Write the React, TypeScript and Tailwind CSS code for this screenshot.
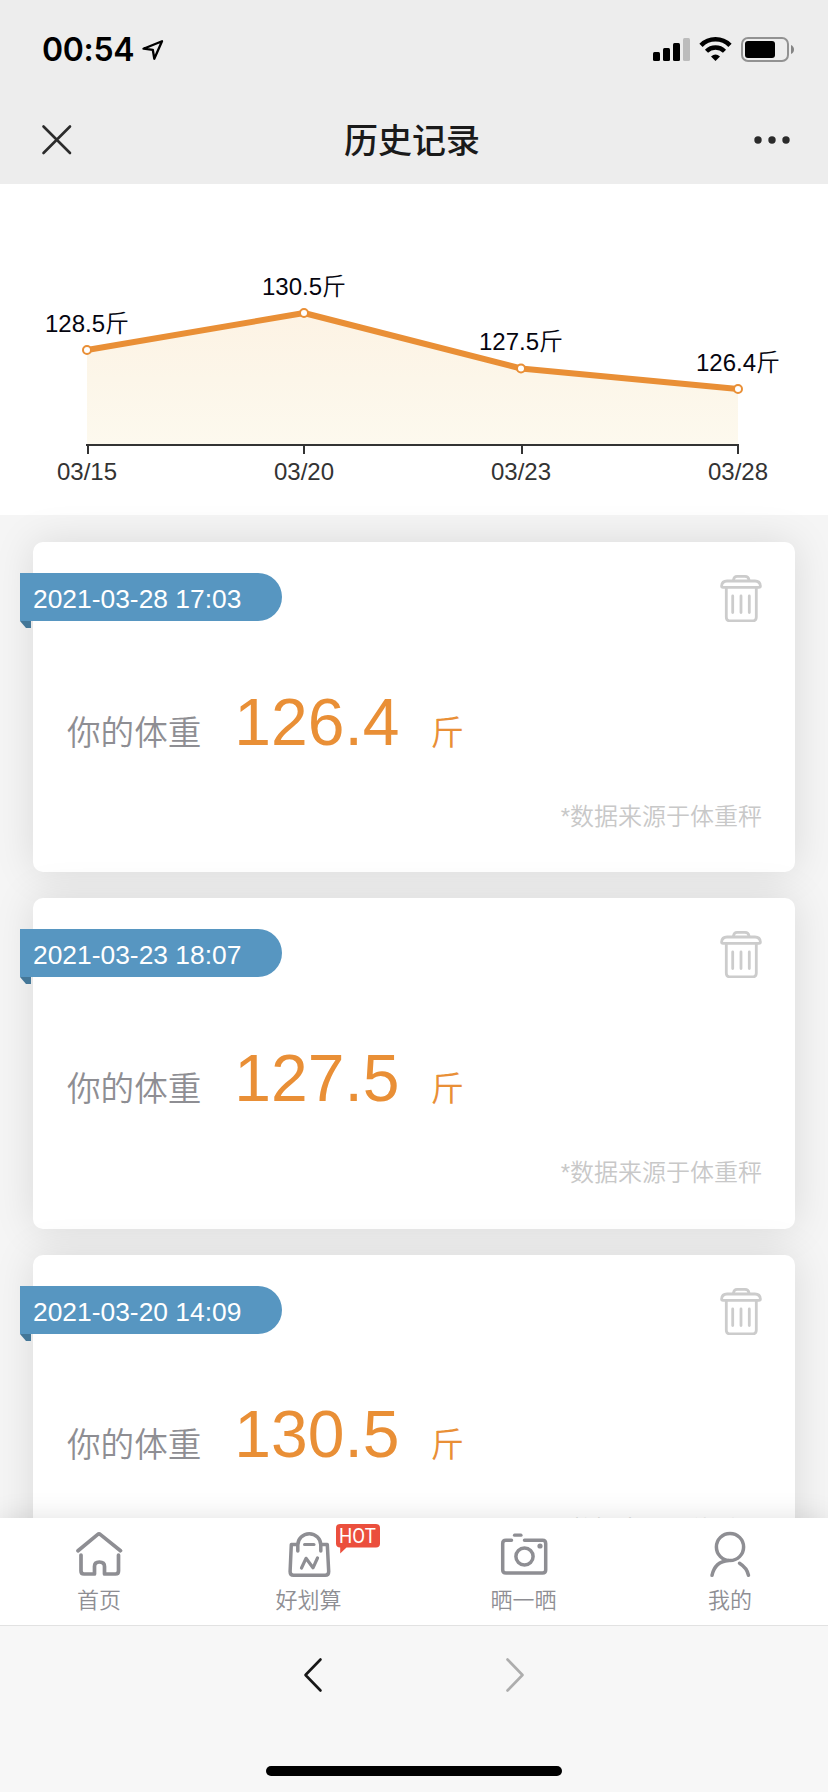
const records = [
  { time: '2021-03-28 17:03', weight: '126.4' },
  { time: '2021-03-23 18:07', weight: '127.5' },
  { time: '2021-03-20 14:09', weight: '130.5' },
]

const points = [
  { x: 87, y: 166, tick: 88, label: '128.5斤', date: '03/15' },
  { x: 304, y: 129, tick: 304, label: '130.5斤', date: '03/20' },
  { x: 521, y: 184.5, tick: 522, label: '127.5斤', date: '03/23' },
  { x: 738, y: 205, tick: 738, label: '126.4斤', date: '03/28' },
]

function StatusBar() {
  return (
    <div className="flex h-[96px] items-center justify-between pl-[42px] pr-[33px] pt-1">
      <div className="flex items-center">
        <span className="font-[Inter,sans-serif] text-[32px] font-semibold leading-none tracking-[-0.3px] text-black">
          00:54
        </span>
        <svg className="ml-1.5" width="26" height="26" viewBox="140 37 26 26" fill="none" stroke="#000" strokeWidth="2.3" strokeLinejoin="round">
          <path d="M143.5 48.7 L162 41.2 L154.3 58.8 L152.8 49.8 Z" />
        </svg>
      </div>
      <svg width="144" height="28" viewBox="651 36 144 28">
        <rect x="653" y="52" width="7" height="9" rx="1.5" />
        <rect x="663" y="48" width="7" height="13" rx="1.5" />
        <rect x="673" y="43" width="7" height="18" rx="1.5" />
        <rect x="683" y="38" width="7" height="23" rx="1.5" fill="#bcbcbc" />
        <g fill="none" stroke="#000">
          <path d="M701 45.3 A20.5 20.5 0 0 1 730 45.3" strokeWidth="4.6" />
          <path d="M706.5 51.2 A12.8 12.8 0 0 1 724.5 51.2" strokeWidth="4.4" />
        </g>
        <path d="M711 56.5 Q715.5 52.6 720 56.5 L715.5 61 Z" />
        <rect x="742" y="38" width="46" height="23" rx="6" fill="none" stroke="#929292" strokeWidth="2" />
        <rect x="745" y="41" width="30" height="17" rx="3" />
        <path d="M791 45 Q794 46.5 794 49.5 Q794 52.5 791 54 Z" fill="#858585" />
      </svg>
    </div>
  )
}

function NavBar() {
  return (
    <div className="flex h-[88px] items-center justify-between px-[36px]">
      <svg width="42" height="42" viewBox="0 0 42 42" stroke="#2b2b2b" strokeWidth="2.6" strokeLinecap="round">
        <path d="M7.5 7.5 L34 34 M34 7.5 L7.5 34" />
      </svg>
      <h1 className="pr-1 pt-0.5 text-[34px] font-medium leading-none text-[#1a1a1a]">历史记录</h1>
      <svg width="42" height="42" viewBox="750 119 42 42" fill="#2b2b2b">
        <circle cx="758" cy="140" r="3.7" />
        <circle cx="772" cy="140" r="3.7" />
        <circle cx="786" cy="140" r="3.7" />
      </svg>
    </div>
  )
}

function WeightChart() {
  const line = points.map((p) => `${p.x},${p.y}`).join(' ')
  return (
    <div className="h-[331px] bg-white">
      <svg width="828" height="331" viewBox="0 0 828 331">
        <defs>
          <linearGradient id="area" x1="0" y1="0" x2="0" y2="1">
            <stop offset="0" stopColor="#fdf3e4" />
            <stop offset="0.5" stopColor="#fcf6e9" />
            <stop offset="1" stopColor="#fdf9ee" />
          </linearGradient>
        </defs>
        <polygon points={`87,261 ${line} 738,261`} fill="url(#area)" />
        <path d="M86 261 H739" stroke="#333" strokeWidth="2" />
        <polyline points={line} fill="none" stroke="#e98f36" strokeWidth="6" strokeLinejoin="bevel" />
        {points.map((p) => (
          <g key={p.date}>
            <path d={`M${p.tick} 261 V270`} stroke="#333" strokeWidth="2" />
            <circle cx={p.x} cy={p.y} r="4" fill="#fff" stroke="#e98f36" strokeWidth="2" />
            <text x={p.x} y={p.y - 18.5} textAnchor="middle" fontSize="24" fill="#05050f" className="font-[350]">
              {p.label}
            </text>
            <text x={p.x} y="296" textAnchor="middle" fontSize="24" fill="#333">
              {p.date}
            </text>
          </g>
        ))}
      </svg>
    </div>
  )
}

function TrashIcon() {
  return (
    <svg width="42" height="49" viewBox="720 573 42 49" fill="none" stroke="#ccc" strokeWidth="2.8" strokeLinecap="round" strokeLinejoin="round">
      <path d="M733.5 580 Q734 576.3 737 576.3 H745 Q748.5 576.3 749 580" />
      <path d="M727 581 H755 Q760 581 760.4 586 Q760.4 587.3 759 587.3 H723 Q721.6 587.3 721.6 586 Q722 581 727 581 Z" />
      <path d="M726.3 588 V617 Q726.3 621 730.5 621 H752 Q756.3 621 756.3 617 V588" />
      <path d="M732.7 596 V612.5 M741 596 V612.5 M749.3 596 V612.5" />
    </svg>
  )
}

function RecordCard({ time, weight }: { time: string; weight: string }) {
  return (
    <div className="relative h-[330.4px] shrink-0 rounded-[10px] bg-white shadow-[0_0_40px_rgba(0,0,0,0.115)]">
      <div className="flex items-start justify-between pr-[33px] pt-[31px]">
        <div className="-ml-[13px]">
          <div className="flex h-12 w-[262px] items-center rounded-r-full bg-[#5796c1] pl-[13px] pt-1 text-[26.4px] leading-none text-white">
            {time}
          </div>
          <svg width="11" height="7" viewBox="0 0 11 7" fill="#447798">
            <path d="M0 0 H11 V7 H6 Z" />
          </svg>
        </div>
        <TrashIcon />
      </div>
      <div className="mt-[53.5px] flex items-baseline pl-[34px] leading-[80px]">
        <span className="text-[33.6px] font-[350] text-[#8e8e93]">你的体重</span>
        <span className="ml-[33px] text-[66px] text-[#e98f36]">{weight}</span>
        <span className="ml-[31px] text-[33.6px] font-[350] text-[#e98f36]">斤</span>
      </div>
      <p className="mt-[25.5px] pr-[33px] text-right text-2xl font-[350] leading-9 text-[#c8c8c8]">*数据来源于体重秤</p>
    </div>
  )
}

function TabBar() {
  return (
    <nav className="relative flex h-[107px] shrink-0 bg-white text-[22px] font-[350] leading-8 text-[#8e8e93] shadow-[0_0_26px_rgba(0,0,0,0.12)]">
      <div className="flex w-[198px] shrink-0 flex-col items-center pt-3">
        <svg width="48" height="50" viewBox="75 1530 48 50" fill="none" stroke="#8e8e93" strokeWidth="3.7" strokeLinecap="round" strokeLinejoin="round">
          <path d="M78 1550.7 L97.5 1534.6 Q99 1533.4 100.5 1534.6 L120.5 1550.7" />
          <path d="M81 1555 V1571 Q81 1574 84 1574 H94.5 V1566.5 Q94.5 1562 99.3 1562 Q104.5 1562 104.5 1566.5 V1574 H115.5 Q118.5 1574 118.5 1571 V1555" />
        </svg>
        <span className="mt-[5px]">首页</span>
      </div>
      <div className="relative flex w-[221px] shrink-0 flex-col items-center pt-3">
        <svg width="48" height="50" viewBox="284.5 1530 48 50" fill="none" stroke="#8e8e93" strokeWidth="3.5" strokeLinecap="round" strokeLinejoin="round">
          <path d="M297.3 1551 V1545 A11.5 11.3 0 0 1 320.3 1545 V1551" />
          <path d="M296.5 1544.5 H290.8 L289.6 1571.5 Q289.6 1575.3 293 1575.3 H324.7 Q328.2 1575.3 328.2 1571.5 L326.8 1544.5 H320.5" />
          <path d="M304 1544.5 H313.5" strokeWidth="3" />
          <path d="M301 1568 L305.5 1558.3 L312.5 1567.8 L317 1558" strokeWidth="3.2" />
        </svg>
        <span className="mt-[5px]">好划算</span>
        <svg className="absolute left-[138px] top-[6px]" width="44" height="30" viewBox="0 0 44 30">
          <path d="M4 0 H40 Q44 0 44 4 V19.5 Q44 23.5 40 23.5 H10.5 L4.2 29.5 V23.5 Q0 23.5 0 19.5 V4 Q0 0 4 0 Z" fill="#eb4f3d" />
          <text x="3" y="19" fontSize="20" textLength="37" lengthAdjust="spacingAndGlyphs" fill="#fff" className="font-[Roboto,sans-serif] font-normal">
            HOT
          </text>
        </svg>
      </div>
      <div className="flex w-[209px] shrink-0 flex-col items-center pt-3">
        <svg width="48" height="50" viewBox="499.5 1530 48 50" fill="none" stroke="#8e8e93" strokeWidth="3.5" strokeLinecap="round" strokeLinejoin="round">
          <path d="M511 1540.3 H505.5 Q502.2 1540.3 502.2 1543.5 V1570 Q502.2 1573 505.5 1573 H542 Q545.2 1573 545.2 1570 V1543.5 Q545.2 1540.3 542 1540.3 H524" />
          <path d="M514 1535.2 H520.5" strokeWidth="3.2" />
          <circle cx="524" cy="1556.5" r="8.6" />
          <circle cx="539.5" cy="1546" r="2.6" fill="#8e8e93" stroke="none" />
        </svg>
        <span className="mt-[5px]">晒一晒</span>
      </div>
      <div className="flex w-[204px] shrink-0 flex-col items-center pt-3">
        <svg width="48" height="50" viewBox="706.5 1530 48 50" fill="none" stroke="#8e8e93" strokeWidth="3.5" strokeLinecap="round">
          <circle cx="730.5" cy="1547" r="13.6" />
          <path d="M712.5 1575.3 Q715.5 1561.5 729 1560.5" />
          <path d="M740 1563.3 Q747.5 1568 749 1575.3" />
        </svg>
        <span className="mt-[5px]">我的</span>
      </div>
    </nav>
  )
}

function BrowserBar() {
  return (
    <div className="relative flex h-[167px] shrink-0 flex-col items-center justify-between border-t border-[#e2e2e2] bg-[#f7f7f7] pb-4 pt-[29px]">
      <div className="flex gap-[162px]">
        <svg width="40" height="40" viewBox="0 0 40 40" fill="none" stroke="#181818" strokeWidth="2.6" strokeLinecap="round" strokeLinejoin="round">
          <path d="M27.5 4.5 L12.5 20 L27.5 35.5" />
        </svg>
        <svg width="40" height="40" viewBox="0 0 40 40" fill="none" stroke="#adadad" strokeWidth="2.6" strokeLinecap="round" strokeLinejoin="round">
          <path d="M12.5 4.5 L27.5 20 L12.5 35.5" />
        </svg>
      </div>
      <div className="h-2.5 w-[296px] rounded-full bg-black" />
    </div>
  )
}

export default function App() {
  return (
    <div className="flex h-[1792px] w-[828px] flex-col overflow-hidden bg-[#f5f5f5] font-['Liberation_Sans','Noto_Sans_CJK_SC',sans-serif]">
      <header className="h-[184px] shrink-0 bg-[#ededed]">
        <StatusBar />
        <NavBar />
      </header>
      <main className="h-[1334px] overflow-hidden">
        <WeightChart />
        <div className="flex flex-col gap-[26px] px-[33px] pt-[27px]">
          {records.map((r) => (
            <RecordCard key={r.time} time={r.time} weight={r.weight} />
          ))}
        </div>
      </main>
      <TabBar />
      <BrowserBar />
    </div>
  )
}
